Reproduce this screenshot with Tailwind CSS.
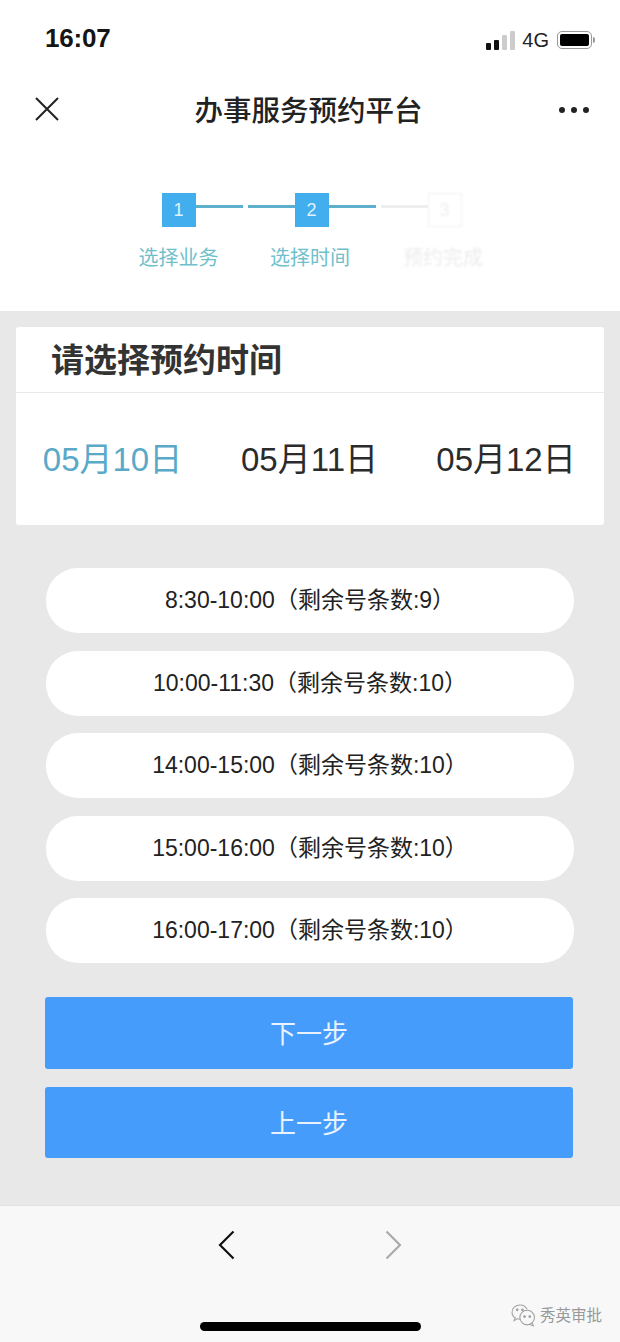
<!DOCTYPE html>
<html lang="zh-CN">
<head>
  <meta charset="UTF-8">
  <meta name="viewport" content="width=device-width, initial-scale=1">
  <title>办事服务预约平台</title>
  <script src="https://cdn.jsdelivr.net/npm/@tailwindcss/browser@4"></script>
</head>
<body class="relative w-[620px] h-[1342px] overflow-hidden bg-white text-[#222] font-['Liberation_Sans','Noto_Sans_CJK_SC',sans-serif]">

  <!-- Status bar -->
  <div class="h-[75px] pl-[45px] pr-[25px] flex items-start justify-between">
    <span class="mt-[22px] text-[26px] leading-[32px] font-bold text-[#151515] tracking-[-0.2px]">16:07</span>
    <div class="mt-[28px] flex items-center">
      <div class="flex items-end gap-[3px] h-[19px] mr-[7px]">
        <span class="w-[5px] h-[7px] rounded-[1px] bg-[#111]"></span>
        <span class="w-[5px] h-[10px] rounded-[1px] bg-[#111]"></span>
        <span class="w-[5px] h-[15px] rounded-[1px] bg-[#ccc]"></span>
        <span class="w-[5px] h-[19px] rounded-[1px] bg-[#ccc]"></span>
      </div>
      <span class="text-[20px] leading-[24px] text-[#222] mr-[8px]">4G</span>
      <div class="w-[35px] h-[18px] rounded-[5px] border border-[#999] p-[2px]">
        <div class="w-full h-full rounded-[2px] bg-black"></div>
      </div>
      <span class="ml-[1px] w-[2px] h-[6px] rounded-r-sm bg-[#999]"></span>
    </div>
  </div>

  <!-- Nav bar -->
  <div class="h-[70px] pl-[35px] pr-[31px] flex items-center justify-between">
    <svg class="w-[24px] h-[24px] mt-[-3px]" viewBox="0 0 24 24" fill="none" stroke="#222" stroke-width="2"><path d="M1 1 L23 23 M23 1 L1 23"/></svg>
    <h1 class="text-[28.500px] leading-[36px] text-[#222] font-medium mr-[1px] mt-[1px]">办事服务预约平台</h1>
    <div class="flex gap-[6px] mt-[-1px]">
      <span class="w-[6px] h-[6px] rounded-full bg-[#222]"></span>
      <span class="w-[6px] h-[6px] rounded-full bg-[#222]"></span>
      <span class="w-[6px] h-[6px] rounded-full bg-[#222]"></span>
    </div>
  </div>

  <!-- Steps -->
  <div class="h-[166px] pt-[48px] pl-[112px] grid grid-cols-[133px_133px_133px] content-start">
    <div class="flex flex-col items-center">
      <div class="flex items-start">
        <span class="w-[47px]"></span>
        <span class="w-[34px] h-[34px] bg-[#42aeee] text-[#dff2ff] text-[18px] flex items-center justify-center">1</span>
        <span class="mt-[12px] w-[47px] h-[3px] bg-[#5fb0cd]"></span>
      </div>
      <span class="mt-[18px] text-[20px] leading-[26px] text-[#6fc0cc]">选择业务</span>
    </div>
    <div class="flex flex-col items-center">
      <div class="flex items-start">
        <span class="mt-[12px] w-[47px] h-[3px] bg-[#5fb0cd]"></span>
        <span class="w-[34px] h-[34px] bg-[#42aeee] text-[#dff2ff] text-[18px] flex items-center justify-center">2</span>
        <span class="mt-[12px] w-[47px] h-[3px] bg-[#5fb0cd]"></span>
      </div>
      <span class="mt-[18px] mr-[3px] text-[20px] leading-[26px] text-[#6fc0cc]">选择时间</span>
    </div>
    <div class="flex flex-col items-center">
      <div class="flex items-start">
        <span class="mt-[12px] w-[47px] h-[3px] bg-[#eeeeee]"></span>
        <span class="w-[34px] h-[34px] border border-[#f0f0f0] text-[#eeeeee] text-[18px] flex items-center justify-center blur-[0.8px]">3</span>
        <span class="w-[47px]"></span>
      </div>
      <span class="mt-[18px] mr-[3px] text-[20px] leading-[26px] text-[#ececec] blur-[1px]">预约完成</span>
    </div>
  </div>

  <!-- Main -->
  <main class="h-[894px] bg-[#e8e8e8] pt-[16px]">
    <section class="mx-[16px] h-[198px] bg-white rounded-[3px] flex flex-col">
      <h2 class="h-[66px] pl-[35px] pt-[14px] text-[33px] leading-[40px] font-bold text-[#333] border-b border-[#e9e9e9]">请选择预约时间</h2>
      <div class="flex-1 pt-[2px] grid grid-cols-3 items-center text-[33px] leading-[40px] text-center text-[#2b2b2b]">
        <span class="mr-[3px] text-[#5aa9c8]">05月10日</span>
        <span class="mr-[1px]">05月11日</span>
        <span>05月12日</span>
      </div>
    </section>

    <div class="mt-[43px] mx-[46px] flex flex-col gap-[17.5px]">
      <div class="h-[65px] rounded-[32px] bg-white flex items-center justify-center text-[23px] text-[#222]">8:30-10:00（剩余号条数:9）</div>
      <div class="h-[65px] rounded-[32px] bg-white flex items-center justify-center text-[23px] text-[#222]">10:00-11:30（剩余号条数:10）</div>
      <div class="h-[65px] rounded-[32px] bg-white flex items-center justify-center text-[23px] text-[#222]">14:00-15:00（剩余号条数:10）</div>
      <div class="h-[65px] rounded-[32px] bg-white flex items-center justify-center text-[23px] text-[#222]">15:00-16:00（剩余号条数:10）</div>
      <div class="h-[65px] rounded-[32px] bg-white flex items-center justify-center text-[23px] text-[#222]">16:00-17:00（剩余号条数:10）</div>
    </div>

    <div class="mt-[34px] ml-[45px] w-[528px] flex flex-col gap-[18px]">
      <button class="h-[72px] pt-[2px] rounded-[3px] bg-[#459cfb] text-[#e8f3ff] text-[26px]">下一步</button>
      <button class="h-[71px] pt-[3px] rounded-[3px] bg-[#459cfb] text-[#e8f3ff] text-[26px]">上一步</button>
    </div>
  </main>

  <!-- Bottom toolbar -->
  <footer class="h-[137px] bg-[#f8f8f8] border-t border-[#e2e2e2] flex flex-col items-center">
    <div class="mt-[24px] flex gap-[150px]">
      <svg class="w-[17px] h-[30px]" viewBox="0 0 17 30" fill="none" stroke="#111" stroke-width="2.2"><path d="M15.5 1.5 L2 15 L15.5 28.5"/></svg>
      <svg class="w-[17px] h-[30px]" viewBox="0 0 17 30" fill="none" stroke="#aaa" stroke-width="2.2"><path d="M1.5 1.5 L15 15 L1.5 28.5"/></svg>
    </div>
    <div class="mt-[62px] w-[221px] h-[9px] rounded-full bg-black"></div>
  </footer>

  <!-- Watermark -->
  <div class="absolute left-[511px] top-[1304px] flex items-center gap-[4px]">
    <svg class="w-[25px] h-[23px]" viewBox="0 0 24 22" fill="none" stroke="#a0a0a0" stroke-width="1">
      <path d="M9 1 C4 1 1 4 1 8 C1 10 2 12 4 13 L3 16 L6 14 C7 14.500 8 14.500 9 14.500"/>
      <path d="M9 1 C12 1 14 2.500 15.500 5"/>
      <circle cx="15.500" cy="13" r="7"/>
      <path d="M20 18 L21.500 21 L17.500 19.500"/>
      <circle cx="6" cy="5.500" r="0.800" fill="#a0a0a0"/>
      <circle cx="11" cy="5.500" r="0.800" fill="#a0a0a0"/>
      <circle cx="13" cy="12" r="0.800" fill="#a0a0a0"/>
      <circle cx="18" cy="12" r="0.800" fill="#a0a0a0"/>
    </svg>
    <span class="text-[15.500px] leading-[20px] text-[#999]">秀英审批</span>
  </div>
</body>
</html>
